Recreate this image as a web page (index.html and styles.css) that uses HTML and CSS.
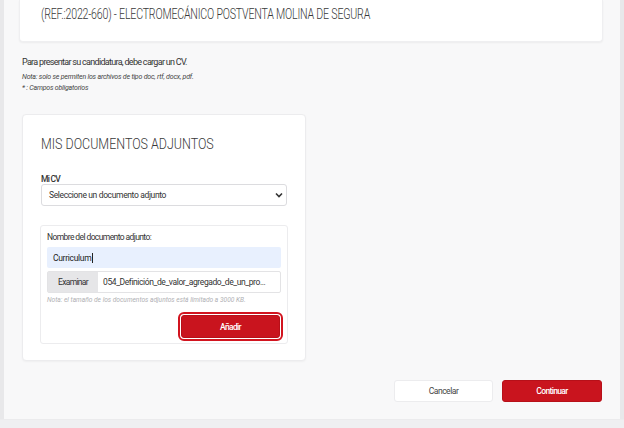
FILE: index.html
```html
<!DOCTYPE html>
<html lang="es">
<head>
<meta charset="utf-8">
<title>Candidatura</title>
<link rel="stylesheet" href="styles.css">
</head>
<body>
<div class="page">
  <header class="head-card">
    <h1 class="job-title">(REF.:2022-660) - ELECTROMECÁNICO POSTVENTA MOLINA DE SEGURA</h1>
  </header>

  <section class="intro">
    <p class="intro-main">Para presentar su candidatura, debe cargar un CV.</p>
    <p class="intro-note">Nota: solo se permiten los archivos de tipo doc, rtf, docx, pdf.</p>
    <p class="intro-note">* : Campos obligatorios</p>
  </section>

  <section class="docs-card">
    <h2 class="docs-title">MIS DOCUMENTOS ADJUNTOS</h2>
    <label class="field-label">Mi CV</label>
    <div class="select">
      <span>Seleccione un documento adjunto</span>
      <svg class="chev" width="8" height="6" viewBox="0 0 8 6"><path d="M1 1.5 L4 4.5 L7 1.5" fill="none" stroke="#333" stroke-width="1.6"/></svg>
    </div>

    <div class="upload-panel">
      <label class="panel-label">Nombre del documento adjunto:</label>
      <div class="name-input"><span>Curriculum</span><span class="caret"></span></div>
      <div class="file-row">
        <span class="file-btn">Examinar</span>
        <span class="file-name">054_Definición_de_valor_agregado_de_un_pro...</span>
      </div>
      <p class="size-note">Nota: el tamaño de los documentos adjuntos está limitado a 3000 KB.</p>
      <div class="add-row"><button class="btn-red btn-add">Añadir</button></div>
    </div>
  </section>

  <div class="actions">
    <button class="btn-white">Cancelar</button>
    <button class="btn-red btn-cont">Continuar</button>
  </div>
</div>
<div class="bottom-band"></div>
</body>
</html>
```

FILE: styles.css
```css
* { box-sizing: border-box; }
html, body { margin: 0; padding: 0; }
body {
  width: 624px;
  height: 428px;
  overflow: hidden;
  background: #f8f8f9;
  font-family: "Roboto", "Liberation Sans", sans-serif;
  color: #333;
}
p, h1, h2 { margin: 0; }

.page {
  height: 419px;
  display: flex;
  flex-direction: column;
  border-left: 4px solid #e8e8ea;
  border-right: 4px solid #e8e8ea;
  padding: 0 17px 0 15px;
}

.head-card {
  height: 42px;
  background: #fff;
  border: 1px solid #efeff1;
  border-top: none;
  border-radius: 0 0 4px 4px;
  box-shadow: 0 1px 2px rgba(0,0,0,0.05);
  padding: 4px 0 0 21px;
}
.job-title {
  display: inline-block;
  font-size: 15.5px;
  line-height: 18px;
  font-weight: 300;
  color: #383838;
  letter-spacing: -0.3px;
  white-space: nowrap;
  transform: scaleX(0.686);
  transform-origin: left center;
}

.intro { margin: 14px 0 0 3px; }
.intro-main {
  font-size: 9px;
  line-height: 12px;
  color: #333;
  letter-spacing: -0.7px;
  margin-bottom: 4px;
}
.intro-note {
  font-size: 7px;
  line-height: 11px;
  font-style: italic;
  color: #444;
  letter-spacing: -0.2px;
}

.docs-card {
  margin: 20px 0 0 3px;
  width: 284px;
  height: 247px;
  background: #fff;
  border: 1px solid #ececee;
  border-radius: 4px;
  box-shadow: 0 1px 2px rgba(0,0,0,0.04);
  padding: 19px 18px 0 18px;
}
.docs-title {
  display: inline-block;
  font-size: 15px;
  line-height: 20px;
  font-weight: 300;
  color: #383838;
  white-space: nowrap;
  transform: scaleX(0.83);
  transform-origin: left center;
  margin-bottom: 20px;
}
.field-label {
  display: block;
  font-size: 8.5px;
  line-height: 10px;
  font-weight: 500;
  color: #333;
  letter-spacing: -0.75px;
}
.select {
  height: 22px;
  width: 246px;
  border: 1px solid #dcdcdf;
  border-radius: 3px;
  display: flex;
  align-items: center;
  justify-content: space-between;
  padding: 0 3px 0 7px;
  font-size: 8.5px;
  color: #333;
  letter-spacing: -0.36px;
}
.chev { display: block; }

.upload-panel {
  margin: 19px 0 0 -1px;
  width: 248px;
  height: 119px;
  border: 1px solid #ececee;
  border-radius: 3px;
  padding: 6px 6px 0 6px;
}
.panel-label {
  display: block;
  font-size: 8.5px;
  line-height: 10px;
  color: #333;
  letter-spacing: -0.6px;
  margin-bottom: 5px;
}
.name-input {
  height: 21px;
  width: 234px;
  background: #e8f0fe;
  border-radius: 2px;
  display: flex;
  align-items: center;
  padding-left: 6px;
  font-size: 8.5px;
  color: #222;
  letter-spacing: -0.3px;
}
.caret {
  display: inline-block;
  width: 1px;
  height: 10px;
  background: #222;
  margin-left: 1px;
}
.file-row {
  margin-top: 3px;
  height: 22px;
  width: 234px;
  border: 1px solid #e3e3e5;
  border-radius: 2px;
  display: flex;
  align-items: stretch;
  font-size: 8.5px;
  color: #333;
  letter-spacing: -0.4px;
}
.file-btn {
  width: 50px;
  background: #e6e6e8;
  display: flex;
  align-items: center;
  justify-content: center;
  letter-spacing: -0.67px;
}
.file-name {
  display: flex;
  align-items: center;
  padding-left: 5px;
  white-space: nowrap;
}
.size-note {
  margin-top: 2px;
  font-size: 6.6px;
  line-height: 10px;
  font-style: italic;
  color: #b0b0b4;
}
.add-row {
  display: flex;
  justify-content: flex-end;
  margin-top: 10px;
  padding-right: 1px;
}

.btn-red, .btn-white {
  font-family: inherit;
  font-size: 8.5px;
  font-weight: 500;
  letter-spacing: -0.65px;
  border-radius: 3px;
  cursor: pointer;
}
.btn-red {
  background: #c9141e;
  color: #fff;
  border: 1px solid #b71019;
}
.btn-add {
  width: 99px;
  height: 23px;
  outline: 2px solid #d2141f;
  outline-offset: 1px;
}

.actions {
  margin-top: 19px;
  display: flex;
  justify-content: flex-end;
  gap: 9px;
  padding-right: 1px;
}
.btn-white {
  width: 99px;
  height: 22px;
  background: #fff;
  border: 1px solid #ececee;
  color: #444;
  font-weight: normal;
  letter-spacing: -0.47px;
}
.btn-cont { width: 100px; height: 22px; }

.bottom-band {
  height: 9px;
  background: #efeff1;
  border-top: 1px solid #ebebed;
}
```
